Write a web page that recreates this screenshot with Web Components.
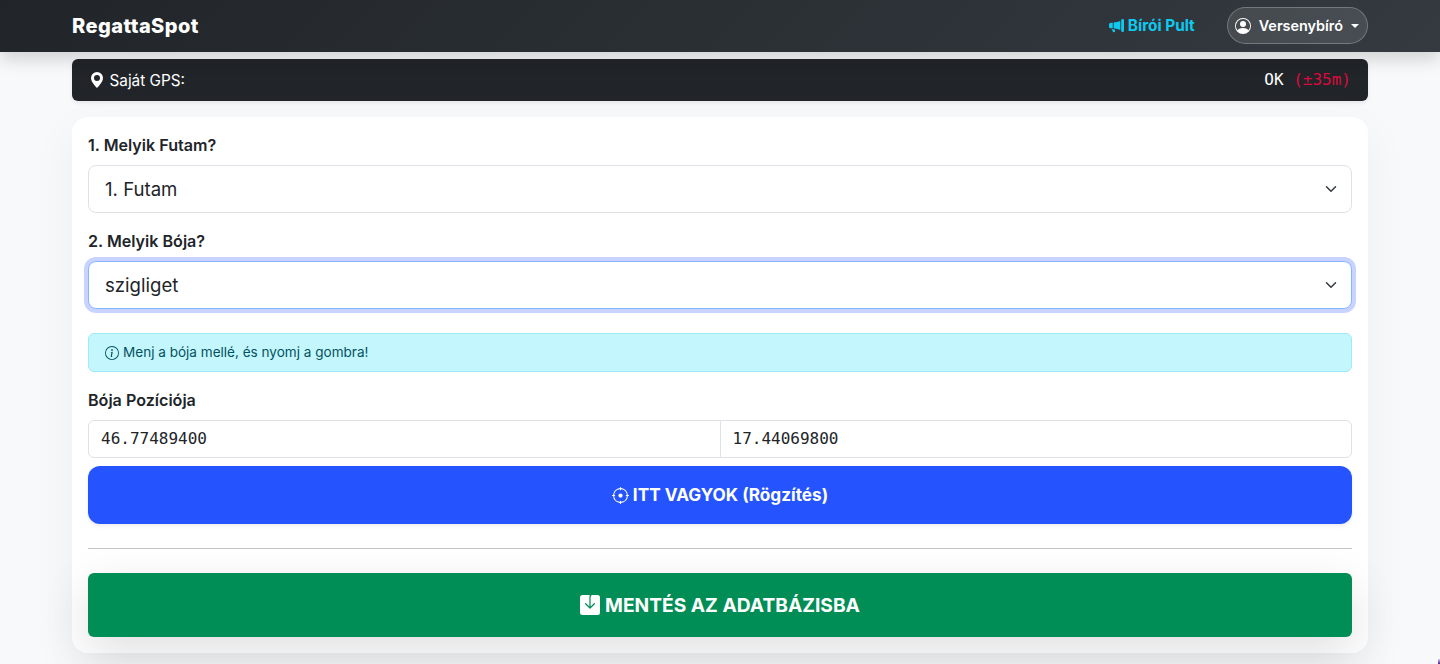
<!DOCTYPE html>
<html lang="hu"><head><meta charset="utf-8"><title>RegattaSpot</title>
<style>
html,body{margin:0;height:664px;overflow:hidden}
body{background:#f8f9fb;font-family:Inter,"Liberation Sans",sans-serif;color:#212529;font-size:16px;line-height:1.5}
</style></head><body>
<app-nav></app-nav>
<main-col>
  <gps-bar></gps-bar>
  <form-card>
    <form-label>1. Melyik Futam?</form-label>
    <pick-box>1. Futam</pick-box>
    <form-label>2. Melyik Bója?</form-label>
    <pick-box focused>szigliget</pick-box>
    <info-note>Menj a bója mellé, és nyomj a gombra!</info-note>
    <form-label>Bója Pozíciója</form-label>
    <coord-group a="46.77489400" b="17.44069800"></coord-group>
    <big-btn kind="primary" icon="crosshair">ITT VAGYOK (Rögzítés)</big-btn>
    <card-rule></card-rule>
    <big-btn kind="success" icon="save">MENTÉS AZ ADATBÁZISBA</big-btn>
  </form-card>
</main-col>
<corner-sliver></corner-sliver>
<script>
const I={
geo:'<path d="M8 16s6-5.686 6-10A6 6 0 0 0 2 6c0 4.314 6 10 6 10m0-7a3 3 0 1 1 0-6 3 3 0 0 1 0 6"/>',
mega:'<path d="M13 2.5a1.5 1.5 0 0 1 3 0v11a1.5 1.5 0 0 1-3 0zm-1 .724c-2.067.95-4.539 1.481-7 1.656v6.237a25 25 0 0 1 1.088.085c2.053.204 4.038.668 5.912 1.56zm-8 7.841V4.934c-.68.027-1.399.043-2.008.053A2.02 2.02 0 0 0 0 7v2c0 1.106.896 1.996 1.994 2.009l.496.008a64 64 0 0 1 1.51.048m1.39 1.081q.428.032.85.078l.253 1.69a1 1 0 0 1-.983 1.187h-.548a1 1 0 0 1-.916-.599l-1.314-2.48a66 66 0 0 1 1.692.064q.491.026.966.06"/>',
person:'<path d="M11 6a3 3 0 1 1-6 0 3 3 0 0 1 6 0"/><path fill-rule="evenodd" d="M0 8a8 8 0 1 1 16 0A8 8 0 0 1 0 8m8-7a7 7 0 0 0-5.468 11.37C3.242 11.226 4.805 10 8 10s4.757 1.225 5.468 2.37A7 7 0 0 0 8 1"/>',
info:'<path d="M8 15A7 7 0 1 1 8 1a7 7 0 0 1 0 14m0 1A8 8 0 1 0 8 0a8 8 0 0 0 0 16"/><path d="m8.93 6.588-2.29.287-.082.416.45.083c.294.07.352.176.288.469l-.738 3.468c-.194.897.105 1.319.808 1.319.545 0 1.178-.252 1.465-.598l.088-.416c-.2.176-.492.246-.686.246-.275 0-.375-.193-.304-.533zM9 4.5a1 1 0 1 1-2 0 1 1 0 0 1 2 0"/>',
crosshair:'<path d="M8.5.5a.5.5 0 0 0-1 0v.518A7 7 0 0 0 1.018 7.5H.5a.5.5 0 0 0 0 1h.518A7 7 0 0 0 7.5 14.982v.518a.5.5 0 0 0 1 0v-.518A7 7 0 0 0 14.982 8.5h.518a.5.5 0 0 0 0-1h-.518A7 7 0 0 0 8.5 1.018zm-6.48 7A6 6 0 0 1 7.5 2.02v.48a.5.5 0 0 0 1 0v-.48a6 6 0 0 1 5.48 5.48h-.48a.5.5 0 0 0 0 1h.48a6 6 0 0 1-5.48 5.48v-.48a.5.5 0 0 0-1 0v.48A6 6 0 0 1 2.02 8.5h.48a.5.5 0 0 0 0-1zM8 10a2 2 0 1 0 0-4 2 2 0 0 0 0 4"/>',
save:'<path d="M8.5 1.5A1.5 1.5 0 0 1 10 0h4a2 2 0 0 1 2 2v12a2 2 0 0 1-2 2H2a2 2 0 0 1-2-2V2a2 2 0 0 1 2-2h6c-.314.418-.5.937-.5 1.5v7.793L4.854 6.646a.5.5 0 1 0-.708.708l3.5 3.5a.5.5 0 0 0 .708 0l3.5-3.5a.5.5 0 0 0-.708-.708L8.5 9.293z"/>'
};
const icon=(n,s)=>`<svg xmlns="http://www.w3.org/2000/svg" width="${s}" height="${s}" viewBox="0 0 16 16" fill="currentColor" aria-hidden="true">${I[n]}</svg>`;
function def(name,css,html){
  customElements.define(name,class extends HTMLElement{
    connectedCallback(){
      if(this.shadowRoot)return;
      this.attachShadow({mode:'open'}).innerHTML=`<style>${css}</style>`+(typeof html==='function'?html(this):html);
    }
  });
}
def('app-nav',`:host{display:block;height:52px;background:linear-gradient(135deg,#212529,#343a40);box-shadow:0 8px 16px rgba(0,0,0,.15);position:relative}
.in{height:52px;box-sizing:border-box;width:1296px;margin:0 auto;display:flex;align-items:center;color:#fff}
.brand{font-weight:800;font-size:20px;letter-spacing:.45px;margin-right:auto}
.link{display:flex;align-items:center;gap:4px;color:#0dcaf0;font-weight:700;font-size:15.35px;margin-right:32px}
.user{display:flex;align-items:center;height:37px;margin-top:-1px;box-sizing:border-box;border:1px solid rgba(255,255,255,.25);background:rgba(255,255,255,.1);border-radius:19px;padding:0 8px 0 7px;font-weight:600;font-size:14.4px;}
.user svg{margin-right:8px}
.caret{width:0;height:0;border-top:4.2px solid #fff;border-left:4.2px solid transparent;border-right:4.2px solid transparent;margin:0 0 0 8px}`,
`<div class="in"><div class="brand">RegattaSpot</div><div class="link">${icon('mega',15)}<span>Bírói Pult</span></div><div class="user">${icon('person',16)}<span>Versenybíró</span><i class="caret"></i></div></div>`);
def('main-col',`:host{display:block;width:1296px;margin:7px auto 0}`,`<slot></slot>`);
def('gps-bar',`:host{display:flex;align-items:center;justify-content:space-between;height:42px;box-sizing:border-box;background:#212529;color:#fff;border-radius:6px;padding:0 17px;font-size:15.3px;margin-bottom:16px;box-shadow:0 2px 4px rgba(0,0,0,.075)}
.l{display:flex;align-items:center;gap:4.5px}.l span{padding-top:2px}.m{font-family:"DejaVu Sans Mono","Liberation Mono",monospace;font-size:16px}.r{color:#dc0a3c}.o{color:#fff}`,
`<div class="l">${icon('geo',16)}<span>Saját GPS:</span></div><div class="m"><span class="o">OK</span> <span class="r">(±35m)</span></div>`);
def('form-card',`:host{display:block;background:#fff;border-radius:16px;padding:16px;box-sizing:border-box;height:536px;box-shadow:0 16px 48px rgba(0,0,0,.05)}`,`<slot></slot>`);
def('form-label',`:host{display:block;font-weight:600;font-size:16.1px;line-height:24px;margin-bottom:8px}`,`<slot></slot>`);
def('pick-box',`:host{display:flex;align-items:center;justify-content:space-between;height:48px;box-sizing:border-box;border:1px solid #dee2e6;border-radius:8px;padding:0 16px;font-size:18.6px;background:#fff;margin-bottom:16px}
:host([focused]){border-color:#86b7fe;box-shadow:0 0 0 4px rgba(37,84,255,.25);margin-bottom:24px}
span{padding-top:2px}svg{display:block;margin-right:-2px}`,
`<span><slot></slot></span><svg width="12" height="12" viewBox="0 0 16 16"><path fill="none" stroke="#343a40" stroke-linecap="round" stroke-linejoin="round" stroke-width="2" d="m2 5 6 6 6-6"/></svg>`);
def('info-note',`:host{display:flex;align-items:center;gap:4px;height:39px;box-sizing:border-box;background:#c3f7fd;border:1px solid #9eeaf9;border-radius:6px;padding:0 16px;color:#055160;font-size:13.55px;margin-bottom:16px}`,
`${icon('info',14)}<span><slot></slot></span>`);
def('coord-group',`:host{display:flex;height:38px;margin-bottom:8px;font-family:"DejaVu Sans Mono","Liberation Mono",monospace;font-size:16px}
div{flex:1;border:1px solid #dee2e6;display:flex;align-items:center;padding:0 12px;box-sizing:border-box;background:#fff}
.a{border-radius:6px 0 0 6px}.b{border-radius:0 6px 6px 0;margin-left:-1px}`,
h=>`<div class="a">${h.getAttribute('a')}</div><div class="b">${h.getAttribute('b')}</div>`);
def('big-btn',`:host{display:flex;align-items:center;justify-content:center;color:#fff;font-weight:700;box-sizing:border-box}
:host([kind=primary]){height:58px;background:#2554ff;border-radius:12px;font-size:17.2px;gap:4px;box-shadow:0 2px 4px rgba(0,0,0,.075)}
:host([kind=success]){height:64px;background:#018e56;border-radius:6px;font-size:19.2px;gap:5px;box-shadow:0 16px 48px rgba(0,0,0,.125)}`,
h=>`${icon(h.getAttribute('icon'),h.getAttribute('icon')==='save'?20:17)}<span><slot></slot></span>`);
def('card-rule',`:host{display:block;height:1px;background:#c4c5c6;margin:24px 0}`,``);
def('corner-sliver',`:host{display:block;position:fixed;right:0;bottom:0;width:2px;height:5px;background:linear-gradient(#d9cdf0,#4b1d9b)}`,``);
</script>
</body></html>
